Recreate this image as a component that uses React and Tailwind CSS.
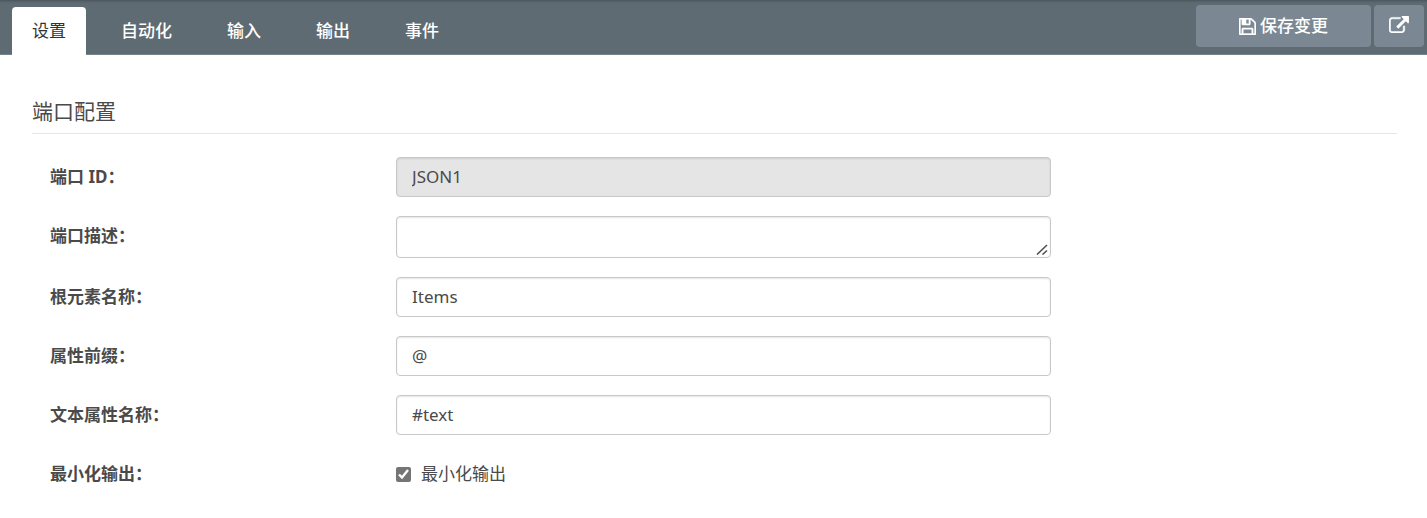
import clsx from "clsx";
import {useState} from "react";

const tabs = ["设置", "自动化", "输入", "输出", "事件"]

const controlClass = "block w-full rounded-[4px] border border-[#c8c8c8] px-[15px] text-[17px] leading-6 text-[#4a4a4a] shadow-[inset_0_1px_2px_rgba(0,0,0,0.1)] outline-none focus:border-[#7b8893]"

function SaveIcon() {
  return (
    <svg className="size-[17px]" viewBox="0 128 1536 1536" fill="currentColor" stroke="currentColor" strokeWidth="40" aria-hidden="true">
      <path d="M384 1536h768v-384h-768v384zm896 0h128v-896q0-14-10-38.5t-20-34.5l-281-281q-10-10-34-20t-39-10v416q0 40-28 68t-68 28h-576q-40 0-68-28t-28-68v-416h-128v1280h128v-416q0-40 28-68t68-28h832q40 0 68 28t28 68v416zm-384-928v-320q0-13-9.5-22.5t-22.5-9.5h-192q-13 0-22.5 9.5t-9.5 22.5v320q0 13 9.5 22.5t22.5 9.5h192q13 0 22.5-9.5t9.5-22.5zm640 32v928q0 40-28 68t-68 28h-1344q-40 0-68-28t-28-68v-1344q0-40 28-68t68-28h928q40 0 88 20t76 48l280 280q28 28 48 76t20 88z"/>
    </svg>
  )
}

function ExternalLinkIcon() {
  return (
    <svg className="mb-[3px] h-[17px] w-5" viewBox="0 0 1792 1536" fill="currentColor" stroke="currentColor" strokeWidth="50" aria-hidden="true">
      <path d="M1408 928v320q0 119-84.5 203.5t-203.5 84.5h-832q-119 0-203.5-84.5t-84.5-203.5v-832q0-119 84.5-203.5t203.5-84.5h704q14 0 23 9t9 23v64q0 14-9 23t-23 9h-704q-66 0-113 47t-47 113v832q0 66 47 113t113 47h832q66 0 113-47t47-113v-320q0-14 9-23t23-9h64q14 0 23 9t9 23zm384-864v512q0 26-19 45t-45 19-45-19l-176-176-652 652q-10 10-23 10t-23-10l-114-114q-10-10-10-23t10-23l652-652-176-176q-19-19-19-45t19-45 45-19h512q26 0 45 19t19 45z"/>
    </svg>
  )
}

function ResizeGrip() {
  return (
    <svg className="pointer-events-none absolute right-[3px] bottom-[3px] size-3" viewBox="0 0 12 12" fill="none" stroke="#505050" strokeWidth="1.6" aria-hidden="true">
      <path d="M1 11.5 11 2M6.5 11.5 11 7.5"/>
    </svg>
  )
}

function Field({id, label, children}) {
  return (
    <div className="grid grid-cols-[346fr_655fr_346fr] items-start">
      <label htmlFor={id} className="text-[17px] leading-10 font-bold">{label}</label>
      {children}
    </div>
  )
}

function App() {
  const [active, setActive] = useState("设置")

  return (
    <div className="bg-white font-['Noto_Sans','Noto_Sans_CJK_SC',sans-serif] text-[#4a4a4a]">
      <header className="flex items-start justify-between border-b border-[#748390] bg-[#5f6b73] pr-[3px] pl-3 shadow-[inset_0_4px_3px_-3px_rgba(0,0,0,0.25)]">
        <nav className="flex gap-[15px] pt-[7px]">
          {tabs.map(tab => (
            <button key={tab} type="button" onClick={() => setActive(tab)}
                    className={clsx("-mb-px h-12 rounded-t-[4px] px-5 text-[17px] leading-6",
                      tab === active ? "bg-white text-[#333333]" : "font-medium text-white")}>
              {tab}
            </button>
          ))}
        </nav>
        <div className="flex gap-[3px] pt-[5px]">
          <button type="button" className="flex h-[42px] w-[175px] items-center justify-center gap-1 rounded-[4px] bg-[#7b8893] text-[17px] leading-6 font-medium text-white">
            <SaveIcon/>
            保存变更
          </button>
          <button type="button" aria-label="在新窗口中打开"
                  className="flex h-[42px] w-[50px] items-center justify-center rounded-[4px] bg-[#7b8893] text-white">
            <ExternalLinkIcon/>
          </button>
        </div>
      </header>

      <main className="pt-10 pr-[30px] pb-6 pl-8">
        <h2 className="border-b border-[#e5e5e5] pb-[6px] text-[21px] leading-8">端口配置</h2>
        <form className="flex flex-col gap-[19px] pt-[23px] pl-[18px]" onSubmit={e => e.preventDefault()}>
          <Field id="port-id" label="端口 ID：">
            <input id="port-id" type="text" readOnly defaultValue="JSON1" className={clsx(controlClass, "h-10 bg-[#e5e5e5] pb-[2px]")}/>
          </Field>
          <Field id="description" label="端口描述：">
            <div className="relative">
              <textarea id="description" rows={1} className={clsx(controlClass, "h-[42px] resize-y bg-white py-2 [&::-webkit-resizer]:hidden")}/>
              <ResizeGrip/>
            </div>
          </Field>
          <Field id="root-name" label="根元素名称：">
            <input id="root-name" type="text" defaultValue="Items" className={clsx(controlClass, "h-10 bg-white pb-[2px]")}/>
          </Field>
          <Field id="prefix" label="属性前缀：">
            <input id="prefix" type="text" defaultValue="@" className={clsx(controlClass, "h-10 bg-white pb-[2px]")}/>
          </Field>
          <Field id="text-name" label="文本属性名称：">
            <input id="text-name" type="text" defaultValue="#text" className={clsx(controlClass, "h-10 bg-white pb-[2px]")}/>
          </Field>
          <Field id="minify" label="最小化输出：">
            <div className="flex h-10 items-center gap-[10px] text-[17px] leading-6">
              <input id="minify" type="checkbox" defaultChecked className="size-[15px] accent-[#757575]"/>
              <label htmlFor="minify">最小化输出</label>
            </div>
          </Field>
        </form>
      </main>
    </div>
  )
}

export default App
